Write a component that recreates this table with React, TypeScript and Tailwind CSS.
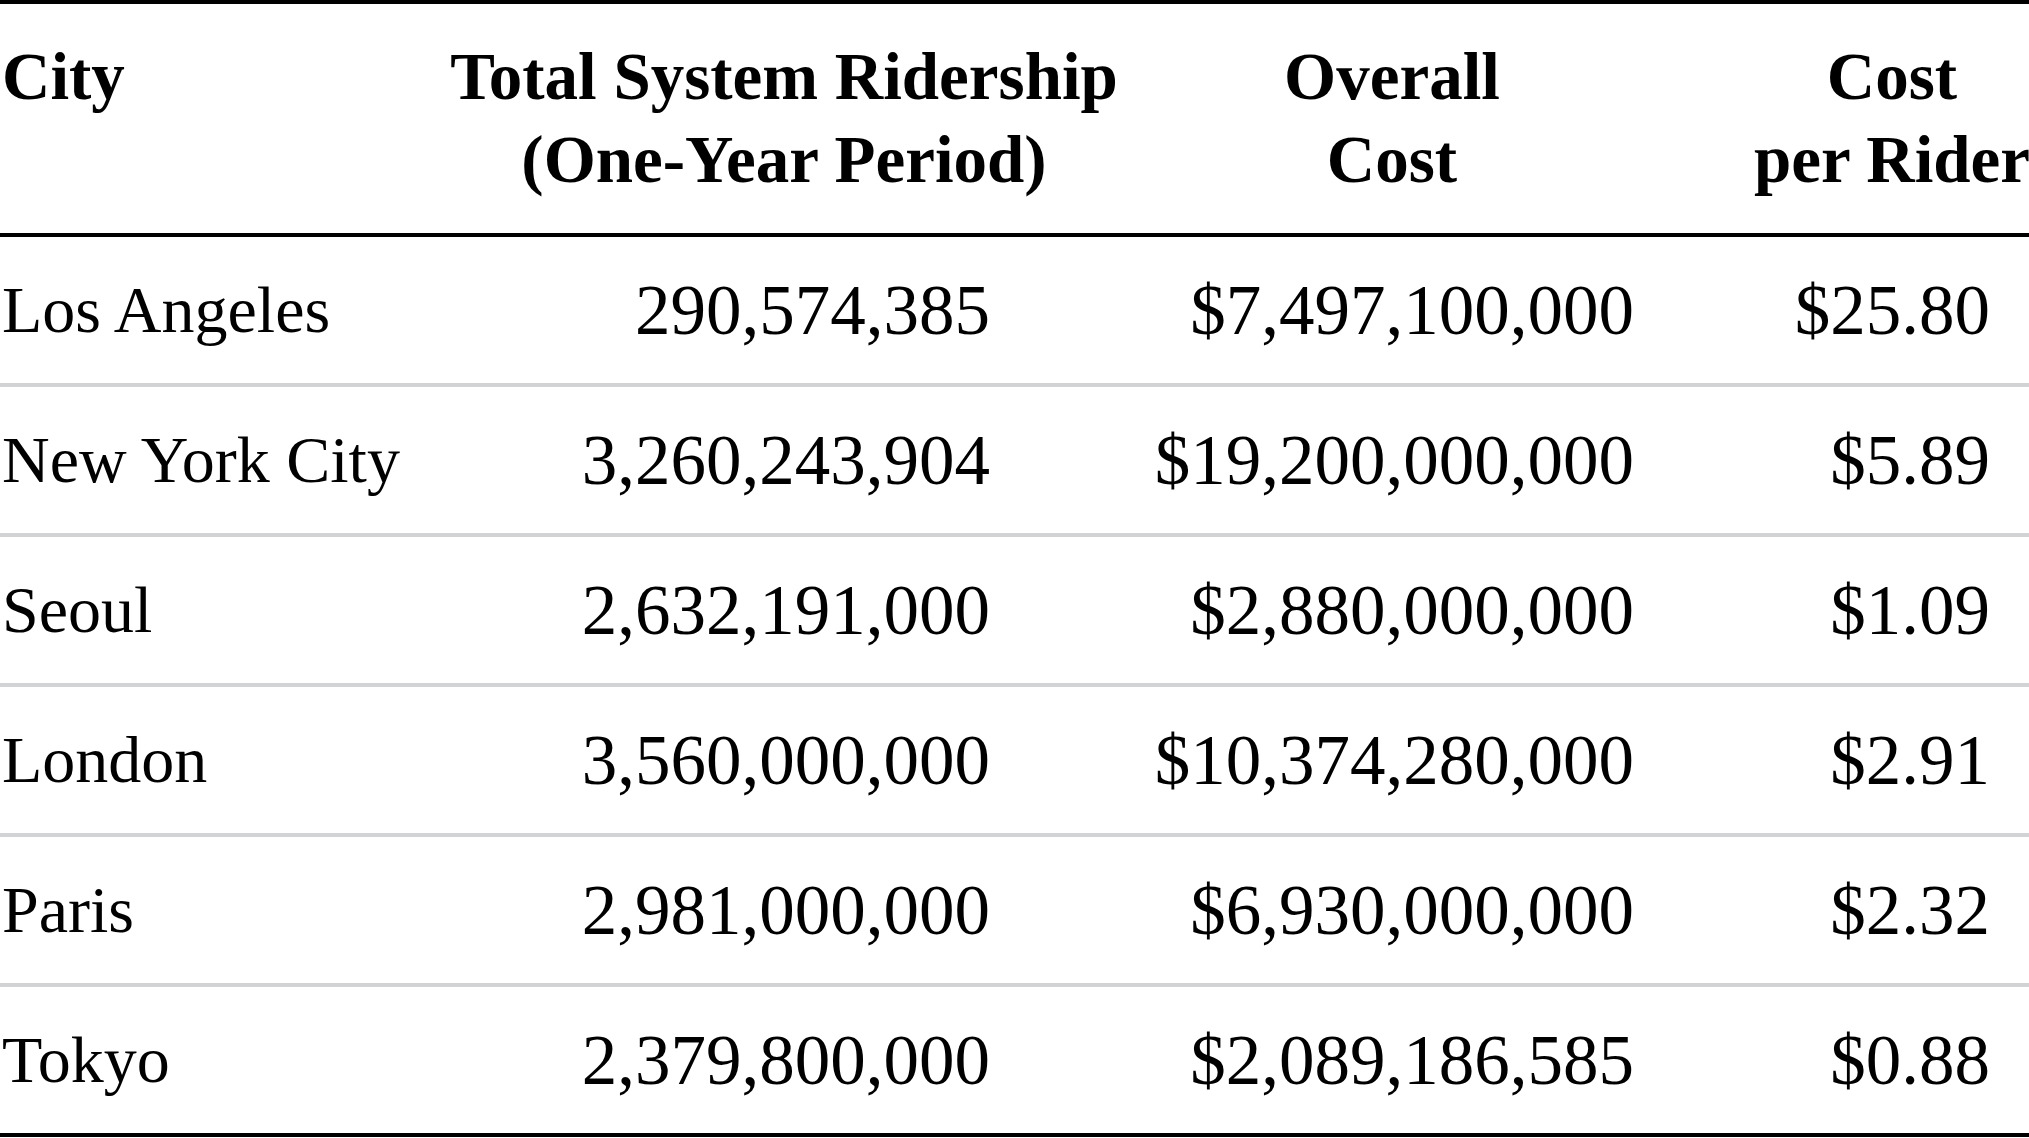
import React from "react";

const rows = [
  { city: "Los Angeles", riders: "290,574,385", cost: "$7,497,100,000", perRider: "$25.80" },
  { city: "New York City", riders: "3,260,243,904", cost: "$19,200,000,000", perRider: "$5.89" },
  { city: "Seoul", riders: "2,632,191,000", cost: "$2,880,000,000", perRider: "$1.09" },
  { city: "London", riders: "3,560,000,000", cost: "$10,374,280,000", perRider: "$2.91" },
  { city: "Paris", riders: "2,981,000,000", cost: "$6,930,000,000", perRider: "$2.32" },
  { city: "Tokyo", riders: "2,379,800,000", cost: "$2,089,186,585", perRider: "$0.88" },
];

function HeadCell({ lines }: { lines: string[] }) {
  return (
    <div className="flex flex-col items-center whitespace-nowrap">
      {lines.map((l) => (
        <span key={l}>{l}</span>
      ))}
    </div>
  );
}

export default function App() {
  return (
    <div className="w-[2029px] h-[1138px] overflow-hidden bg-white text-black font-['Liberation_Serif',serif]">
      <div className="w-[2070px] border-t-4 border-black">
        <div className="grid grid-cols-[498px_572px_644px_356px] border-b-4 border-black pt-[31px] pb-[32px] text-[67px] leading-[83px] font-bold">
          <div className="pl-[2px] text-left">City</div>
          <HeadCell lines={["Total System Ridership", "(One-Year Period)"]} />
          <HeadCell lines={["Overall", "Cost"]} />
          <HeadCell lines={["Cost", "per Rider"]} />
        </div>

        {rows.map((row, i) => (
          <div
            key={row.city}
            className={
              i === rows.length - 1
                ? "grid grid-cols-[498px_572px_644px_356px] items-center h-[150px] border-b-4 border-black"
                : "grid grid-cols-[498px_572px_644px_356px] items-center h-[150px] border-b-4 border-[#d1d3d4]"
            }
          >
            <div className="pl-[2px] text-[66px] leading-none">{row.city}</div>
            <div className="pr-[80px] text-right text-[71px] leading-none">{row.riders}</div>
            <div className="pr-[80px] text-right text-[71px] leading-none">{row.cost}</div>
            <div className="pr-[80px] text-right text-[71px] leading-none">{row.perRider}</div>
          </div>
        ))}
      </div>
    </div>
  );
}
